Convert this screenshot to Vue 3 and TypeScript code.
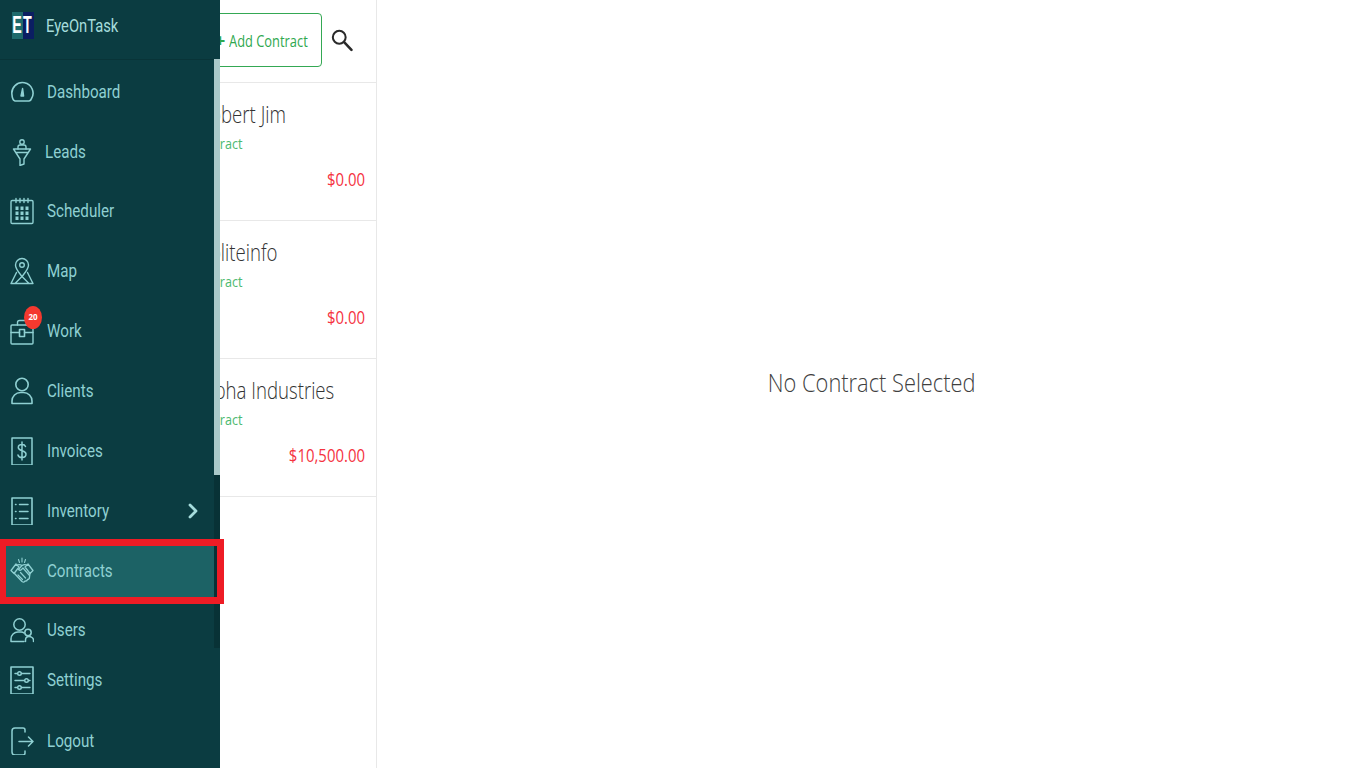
<script setup lang="ts">
interface NavItem { label: string; h: number; icon: string; active?: boolean; chevron?: boolean; badge?: string }
const nav: NavItem[] = [
  { label: 'Dashboard', h: 60, icon: 'dashboard' },
  { label: 'Leads', h: 60, icon: 'leads' },
  { label: 'Scheduler', h: 58, icon: 'scheduler' },
  { label: 'Map', h: 61, icon: 'map' },
  { label: 'Work', h: 60, icon: 'work', badge: '20' },
  { label: 'Clients', h: 60, icon: 'clients' },
  { label: 'Invoices', h: 59, icon: 'invoices' },
  { label: 'Inventory', h: 61, icon: 'inventory', chevron: true },
  { label: 'Contracts', h: 60, icon: 'contracts', active: true },
  { label: 'Users', h: 58, icon: 'users' },
  { label: 'Settings', h: 42, icon: 'settings' },
  { label: 'Logout', h: 80, icon: 'logout' },
]
const contracts = [
  { name: 'Robert Jim', type: 'Contract', amount: '$0.00' },
  { name: 'Politeinfo', type: 'Contract', amount: '$0.00' },
  { name: 'Alpha Industries', type: 'Contract', amount: '$10,500.00' },
]
</script>

<template>
  <div class="page">
    <aside class="sidebar">
      <header class="brand">
        <div class="logo"><span class="logo-text">ET</span></div>
        <span class="brand-name squeeze">EyeOnTask</span>
      </header>
      <nav class="nav">
        <a v-for="item in nav" :key="item.label" class="nav-item" :class="{ active: item.active, leads: item.icon === 'leads' }" :style="{ height: item.h + 'px' }">
          <span class="icon-wrap">
            <svg class="icon" viewBox="0 0 24 28" fill="none" stroke="currentColor" stroke-width="1.400" stroke-linecap="round" stroke-linejoin="round">
              <template v-if="item.icon === 'dashboard'">
                <path d="M5 23h14a3 3 0 0 0 2.400-2.200A10.600 10.600 0 1 0 2 17a11 11 0 0 0 .8 3.800A3 3 0 0 0 5 23Z" stroke-width="1.600"/>
                <path d="M12.600 10.500 11 18h2.600Z" fill="currentColor"/>
              </template>
              <template v-else-if="item.icon === 'leads'">
                <circle cx="12" cy="4" r="2.200"/>
                <path d="M8 11V9a2 2 0 0 1 2-2h4a2 2 0 0 1 2 2v2"/>
                <path d="M3.500 11h17M3.500 11l6.500 10v6.500l4-1.500v-5l6.500-10M6 14.500h12"/>
              </template>
              <template v-else-if="item.icon === 'scheduler'">
                <rect x="1" y="3.500" width="22" height="23" rx="1.200"/>
                <path d="M6 1.500v4M10 1.500v4M14 1.500v4M18 1.500v4"/>
                <g fill="currentColor" stroke="none">
                  <rect x="5.500" y="9.500" width="3" height="3.500"/><rect x="10.500" y="9.500" width="3" height="3.500"/><rect x="15.500" y="9.500" width="3" height="3.500"/>
                  <rect x="5.500" y="14.500" width="3" height="3.500"/><rect x="10.500" y="14.500" width="3" height="3.500"/><rect x="15.500" y="14.500" width="3" height="3.500"/>
                  <rect x="5.500" y="19.500" width="3" height="3.500"/><rect x="10.500" y="19.500" width="3" height="3.500"/><rect x="15.500" y="19.500" width="3" height="3.500"/>
                </g>
              </template>
              <template v-else-if="item.icon === 'map'">
                <path d="M12 19.500C8.500 15 5.500 12 5.500 8a6.500 6.500 0 0 1 13 0c0 4-3 7-6.500 11.500Z"/>
                <circle cx="12" cy="8" r="2.300"/>
                <path d="M6.500 15.500 1 26.500h22l-5.500-11M5 26.500l7-7 7 7"/>
              </template>
              <template v-else-if="item.icon === 'work'">
                <rect x="1" y="8" width="22" height="19" rx="1"/>
                <path d="M7.500 8V5.500a2 2 0 0 1 2-2h5a2 2 0 0 1 2 2V8M1 15.500h8.500M14.500 15.500H23"/>
                <rect x="9.500" y="12.500" width="5" height="7" stroke-width="1.600"/>
              </template>
              <template v-else-if="item.icon === 'clients'">
                <circle cx="12" cy="7.500" r="6.200" stroke-width="1.600"/>
                <path d="M2 26.500V24a8.500 8.500 0 0 1 8.500-8.500h3A8.500 8.500 0 0 1 22 24v2.500Z" stroke-width="1.600"/>
              </template>
              <template v-else-if="item.icon === 'invoices'">
                <rect x="2" y="1" width="20" height="27" stroke-width="1.500"/>
                <path d="M15.500 9.500A3.500 3 0 0 0 12 7.500c-2 0-3.700 1-3.700 3 0 4 7.700 2.500 7.700 6.500 0 2-1.500 3.500-4 3.500a4 3 0 0 1-4-2.500M12 5v18" stroke-width="1.500"/>
              </template>
              <template v-else-if="item.icon === 'inventory'">
                <rect x="2" y="1" width="20" height="27" stroke-width="1.600"/>
                <path d="M9.500 7.500H18M9.500 14.500H18M9.500 21.500H18M5.500 7.500h.5M5.500 14.500h.5M5.500 21.500h.5" stroke-width="1.500"/>
              </template>
              <template v-else-if="item.icon === 'contracts'">
                <path d="M12 1v4M8.500 2.500l1 3M15.500 2.500l-1 3" stroke-width="1.100"/>
                <path d="M1 13.500 6 7l3 3-5 6.500ZM23 13.500 18 7l-3 3 5 6.500Z" stroke-width="1.300"/>
                <path d="M7 8q2.500-1 5 .5 2.500-1.500 5-.5M4.500 16.500l7.500 8q2 1.500 3-.5 2 .5 2.500-1.500 2 0 2-2.500l.5-3.500" stroke-width="1.300"/>
                <path d="M12 8.500 8.500 12.500q1.500 1.500 3 0l1.500-1.500 6.500 7.500M8 18l4.500 4.500M10.500 15.500l5 5.500" stroke-width="1.200"/>
              </template>
              <template v-else-if="item.icon === 'users'">
                <circle cx="9.500" cy="8.500" r="5.700" stroke-width="1.500"/>
                <path d="M1 25.500V23a7 7 0 0 1 7-7h3c1.500 0 2.500.500 3 1M1 25.500h13" stroke-width="1.500"/>
                <circle cx="18" cy="16.500" r="3.200" stroke-width="1.500"/>
                <path d="M15.500 25.500V24c0-2 1.500-3.500 3.500-3.500s4.500 1.500 4.500 3.500v1.500" stroke-width="1.500"/>
              </template>
              <template v-else-if="item.icon === 'settings'">
                <rect x="1" y="1" width="22" height="27" stroke-width="1.600"/>
                <path d="M5 7.500h2.500M11.500 7.500H20M5 14.500h9.500M18.500 14.500H20M5 21.500h2.500M11.500 21.500H20" stroke-width="1.400"/>
                <circle cx="9.500" cy="7.500" r="1.800"/><circle cx="16.500" cy="14.500" r="1.800"/><circle cx="9.500" cy="21.500" r="1.800"/>
              </template>
              <template v-else-if="item.icon === 'logout'">
                <path d="M15 5V3A2 2 0 0 0 13 1H5a3 3 0 0 0-3 3v21a3 3 0 0 0 3 3h8a2 2 0 0 0 2-2v-2" stroke-width="1.500"/>
                <path d="M9 14.500h14M18.500 10l4.500 4.500-4.500 4.500" stroke-width="1.500"/>
              </template>
            </svg>
            <span v-if="item.badge" class="badge">{{ item.badge }}</span>
          </span>
          <span class="nav-label squeeze">{{ item.label }}</span>
          <svg v-if="item.chevron" class="chevron" viewBox="0 0 10 16" fill="none" stroke="currentColor" stroke-width="2.800" stroke-linecap="round" stroke-linejoin="round"><path d="m2 2 6 6-6 6"/></svg>
        </a>
      </nav>
      <div class="scroll-track"><div class="scroll-thumb"></div></div>
    </aside>

    <section class="list">
      <div class="toolbar">
        <button class="add-btn"><span class="plus">+</span><span class="add-label">Add Contract</span></button>
        <svg class="search" viewBox="0 0 24 24" fill="none" stroke="#2a2a2a" stroke-width="2.200" stroke-linecap="round"><circle cx="9" cy="9" r="7"/><path d="m14.300 14.300 8 8.500" stroke-width="2.800"/></svg>
      </div>
      <article v-for="c in contracts" :key="c.name" class="card">
        <div class="card-name">{{ c.name }}</div>
        <div class="card-type">{{ c.type }}</div>
        <div class="card-amount">{{ c.amount }}</div>
      </article>
    </section>

    <main class="detail">
      <span class="empty">No Contract Selected</span>
    </main>

    <div class="highlight"></div>
  </div>
</template>

<style>
html, body { margin: 0; background: #fff; overflow: hidden; }
</style>

<style scoped>
.page { position: relative; display: flex; width: 1366px; height: 768px; overflow: hidden; background: #fff; font-family: "Open Sans", "Liberation Sans", sans-serif; }
.squeeze { display: inline-block; transform: scaleX(.82); transform-origin: left center; white-space: nowrap; }

.sidebar { position: absolute; left: 0; top: 0; z-index: 2; width: 220px; height: 768px; background: #0b3c41; color: #8fd0d2; font-family: Roboto, "Liberation Sans", sans-serif; }
.brand { display: flex; align-items: center; height: 60px; padding: 0 12px 8px; box-sizing: border-box; border-bottom: 1px solid #093438; gap: 12px; }
.logo { width: 22px; height: 27px; background: linear-gradient(90deg, #1f6a6c 0 50%, #0b1e62 50% 100%); display: flex; align-items: center; justify-content: center; overflow: hidden; }
.logo-text { color: #fff; font: 700 23px "Liberation Sans", sans-serif; letter-spacing: 2px; transform: scaleX(.62); }
.brand-name { font-size: 18px; color: #a6dcdc; }
.nav { display: flex; flex-direction: column; margin-top: 2px; }
.nav-item { display: flex; align-items: center; box-sizing: border-box; padding-left: 10px; font-size: 18.500px; }
.nav-item.leads .nav-label { margin-left: -2px; }
.nav-item.active { background: #1c6265; }
.icon-wrap { position: relative; width: 24px; height: 28px; margin-right: 13px; flex: none; }
.icon { width: 24px; height: 28px; display: block; }
.nav-label { color: #8fd0d2; }
.badge { position: absolute; left: 14px; top: -11px; width: 18px; height: 23px; border-radius: 50%; background: #f4392f; color: #fff; font: 700 8px/21px "Open Sans", sans-serif; text-align: center; }
.chevron { width: 10px; height: 16px; margin-left: auto; margin-right: 22px; color: #a6dcdc; }
.scroll-track { position: absolute; right: 0; top: 59px; width: 6px; height: 589px; background: #083236; }
.scroll-thumb { width: 100%; height: 416px; background: #aac9c9; }

.list { width: 377px; flex: none; box-sizing: border-box; height: 768px; border-right: 1px solid #e8e8e8; }
.toolbar { display: flex; align-items: center; height: 83px; box-sizing: border-box; padding: 0 24px 2px 198px; gap: 9px; border-bottom: 1px solid #e8e8e8; }
.add-btn { width: 124px; height: 54px; flex: none; background: #fff; border: 1px solid #34a853; border-radius: 4px; color: #2fa84f; font: 400 16.500px "Open Sans", sans-serif; display: flex; align-items: center; padding: 0 0 0 16px; white-space: nowrap; overflow: hidden; }
.plus { font-weight: 700; font-size: 18px; margin-right: 4px; }
.add-label { display: inline-block; transform: scaleX(.78); transform-origin: left center; }
.search { width: 22px; height: 24px; flex: none; }
.card { height: 138px; box-sizing: border-box; border-bottom: 1px solid #e8e8e8; padding: 17px 11px 0 199px; }
.card-name { font-size: 23px; font-weight: 300; line-height: 28px; color: #333; transform: scaleX(.81); transform-origin: left center; white-space: nowrap; }
.card-type { font-size: 15px; line-height: 20px; margin-top: 5px; margin-left: -7px; color: #4cb970; transform: scaleX(.84); transform-origin: left center; }
.card-amount { text-align: right; margin-top: 14px; font-size: 18px; line-height: 24px; color: #f5333f; transform: scaleX(.83); transform-origin: right center; }

.detail { flex: 1; display: flex; align-items: center; justify-content: center; }
.empty { font-size: 26px; font-weight: 300; color: #3f3f3f; transform: scaleX(.84); white-space: nowrap; margin-top: -5px; }

.highlight { position: absolute; z-index: 3; left: 0; top: 539px; width: 224px; height: 65px; box-sizing: border-box; border: 7px solid #ee1c25; border-left-width: 6px; pointer-events: none; }
</style>
